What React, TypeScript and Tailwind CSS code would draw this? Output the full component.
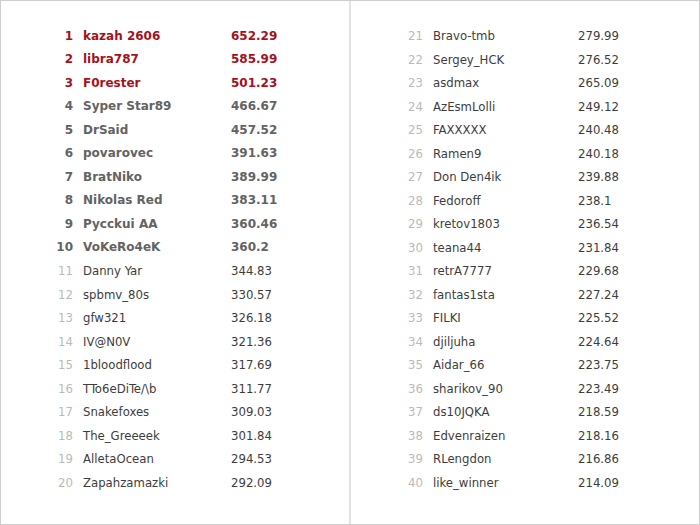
import React from "react";

interface Player {
  rank: number;
  name: string;
  score: string;
}

const players: Player[] = [
  { rank: 1, name: "kazah 2606", score: "652.29" },
  { rank: 2, name: "libra787", score: "585.99" },
  { rank: 3, name: "F0rester", score: "501.23" },
  { rank: 4, name: "Syper Star89", score: "466.67" },
  { rank: 5, name: "DrSaid", score: "457.52" },
  { rank: 6, name: "povarovec", score: "391.63" },
  { rank: 7, name: "BratNiko", score: "389.99" },
  { rank: 8, name: "Nikolas Red", score: "383.11" },
  { rank: 9, name: "Pycckui AA", score: "360.46" },
  { rank: 10, name: "VoKeRo4eK", score: "360.2" },
  { rank: 11, name: "Danny Yar", score: "344.83" },
  { rank: 12, name: "spbmv_80s", score: "330.57" },
  { rank: 13, name: "gfw321", score: "326.18" },
  { rank: 14, name: "IV@N0V", score: "321.36" },
  { rank: 15, name: "1bloodflood", score: "317.69" },
  { rank: 16, name: "TTo6eDiTe/\\b", score: "311.77" },
  { rank: 17, name: "Snakefoxes", score: "309.03" },
  { rank: 18, name: "The_Greeeek", score: "301.84" },
  { rank: 19, name: "AlletaOcean", score: "294.53" },
  { rank: 20, name: "Zapahzamazki", score: "292.09" },
  { rank: 21, name: "Bravo-tmb", score: "279.99" },
  { rank: 22, name: "Sergey_HCK", score: "276.52" },
  { rank: 23, name: "asdmax", score: "265.09" },
  { rank: 24, name: "AzEsmLolli", score: "249.12" },
  { rank: 25, name: "FAXXXXX", score: "240.48" },
  { rank: 26, name: "Ramen9", score: "240.18" },
  { rank: 27, name: "Don Den4ik", score: "239.88" },
  { rank: 28, name: "Fedoroff", score: "238.1" },
  { rank: 29, name: "kretov1803", score: "236.54" },
  { rank: 30, name: "teana44", score: "231.84" },
  { rank: 31, name: "retrA7777", score: "229.68" },
  { rank: 32, name: "fantas1sta", score: "227.24" },
  { rank: 33, name: "FILKI", score: "225.52" },
  { rank: 34, name: "djiljuha", score: "224.64" },
  { rank: 35, name: "Aidar_66", score: "223.75" },
  { rank: 36, name: "sharikov_90", score: "223.49" },
  { rank: 37, name: "ds10JQKA", score: "218.59" },
  { rank: 38, name: "Edvenraizen", score: "218.16" },
  { rank: 39, name: "RLengdon", score: "216.86" },
  { rank: 40, name: "like_winner", score: "214.09" },
];

const Row: React.FC<{ p: Player; nameW: string }> = ({ p, nameW }) => {
  // top 3 red, 4-10 bold gray, rest plain
  if (p.rank <= 10) {
    const color = p.rank <= 3 ? "text-[#a5111c]" : "text-[#636363]";
    return (
      <div className={`flex items-center h-[23.5px] font-bold text-[12px] font-['DejaVu_Sans',sans-serif] ${color}`}>
        <span className="w-[30px] text-right">{p.rank}</span>
        <span className={`ml-[10px] ${nameW}`}>{p.name}</span>
        <span>{p.score}</span>
      </div>
    );
  }
  return (
    <div className="flex items-center h-[23.5px] text-[13px] font-['DejaVu_Sans_Condensed','DejaVu_Sans',sans-serif] text-[#3d3d3d]">
      <span className="w-[30px] text-right text-[#bababa]">{p.rank}</span>
      <span className={`ml-[10px] ${nameW}`}>{p.name}</span>
      <span>{p.score}</span>
    </div>
  );
};

export default function App() {
  return (
    <div className="w-[700px] h-[525px] bg-white border border-[#cfcfcf] flex">
      <div className="w-[348px] pl-[42px] pt-[23px]">
        {players.slice(0, 20).map((p) => (
          <Row key={p.rank} p={p} nameW="w-[148px]" />
        ))}
      </div>
      <div className="w-[2px] bg-[#e2e2e2]" />
      <div className="flex-1 pl-[42px] pt-[23px]">
        {players.slice(20).map((p) => (
          <Row key={p.rank} p={p} nameW="w-[145px]" />
        ))}
      </div>
    </div>
  );
}
